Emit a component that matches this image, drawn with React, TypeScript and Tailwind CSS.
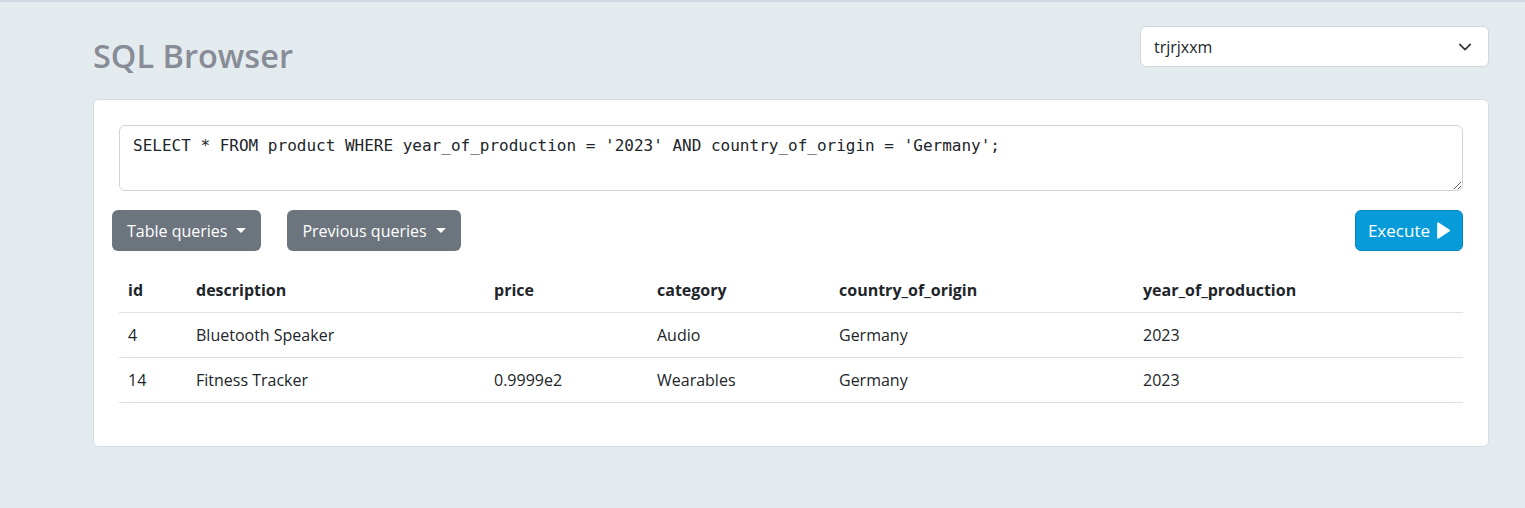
import React, { useState } from 'react';

const COLUMNS = [
  { key: 'id', width: 'w-[68px]' },
  { key: 'description', width: 'w-[298px]' },
  { key: 'price', width: 'w-[163px]' },
  { key: 'category', width: 'w-[182px]' },
  { key: 'country_of_origin', width: 'w-[304px]' },
  { key: 'year_of_production', width: '' },
];

const ROWS: Record<string, string>[] = [
  { id: '4', description: 'Bluetooth Speaker', price: '', category: 'Audio', country_of_origin: 'Germany', year_of_production: '2023' },
  { id: '14', description: 'Fitness Tracker', price: '0.9999e2', category: 'Wearables', country_of_origin: 'Germany', year_of_production: '2023' },
];

function Caret() {
  return <span className="ml-[9px] inline-block border-x-[5px] border-t-[5px] border-x-transparent border-t-white align-middle" />;
}

export default function App() {
  const [sql, setSql] = useState("SELECT * FROM product WHERE year_of_production = '2023' AND country_of_origin = 'Germany';");

  return (
    <div className="min-h-screen border-t-2 border-[#cfd9e3] bg-[#e4ebef] font-['Open_Sans',sans-serif] text-[#212529]">
      <div className="pl-[93px] pr-[36px] pt-[24px]">
        {/* Header */}
        <div className="flex items-start justify-between">
          <h1 className="mt-[8px] text-[32.5px] font-semibold leading-[44px] text-[#878c96]">SQL Browser</h1>
          <div className="flex h-[41px] w-[349px] items-center justify-between rounded-md border border-[#d0d7de] bg-white pl-[13px] pr-[16px] text-[16px]">
            <span>trjrjxxm</span>
            <svg width="14" height="14" viewBox="0 0 16 16" fill="none" stroke="#343a40" strokeWidth="2" strokeLinecap="round" strokeLinejoin="round">
              <path d="M2 5l6 6 6-6" />
            </svg>
          </div>
        </div>

        {/* Card */}
        <div className="mt-[21px] rounded-md border border-[#d4dde6] bg-white px-[25px] pb-[43px] pt-[25px]">
          <textarea
            value={sql}
            onChange={(e) => setSql(e.target.value)}
            rows={2}
            className="block h-[66px] w-full resize-y rounded-md border border-[#ced4da] px-[13px] py-[8px] font-['DejaVu_Sans_Mono',monospace] text-[16px] leading-[24px] text-[#212529] outline-none"
          />

          <div className="mt-[19px] -ml-[7px] flex items-center">
            <button className="flex h-[41px] items-center rounded-md bg-[#6c757d] px-[15px] text-[16px] text-white">
              Table queries <Caret />
            </button>
            <button className="ml-[26px] flex h-[41px] items-center rounded-md bg-[#6c757d] px-[15px] text-[16px] text-white">
              Previous queries <Caret />
            </button>
            <button className="ml-auto flex h-[41px] items-center rounded-md border border-[#0786bf] bg-[#079bda] pl-[12px] pr-[10px] text-[17px] text-white">
              Execute
              <svg className="ml-[3px]" width="19" height="19" viewBox="0 0 16 16" fill="white">
                <path d="M3.5 1.8v12.4c0 .6.7 1 1.2.6l9.3-6.2c.4-.3.4-.9 0-1.2L4.7 1.2c-.5-.4-1.2 0-1.2.6z" />
              </svg>
            </button>
          </div>

          <table className="mt-[18px] w-full border-collapse text-left text-[16px]">
            <thead>
              <tr className="border-b border-[#dee2e6]">
                {COLUMNS.map((c) => (
                  <th key={c.key} className={`${c.width} h-[43px] px-[9px] font-bold`}>
                    {c.key}
                  </th>
                ))}
              </tr>
            </thead>
            <tbody>
              {ROWS.map((r) => (
                <tr key={r.id} className="border-b border-[#dee2e6]">
                  {COLUMNS.map((c) => (
                    <td key={c.key} className="h-[45px] px-[9px]">
                      {r[c.key]}
                    </td>
                  ))}
                </tr>
              ))}
            </tbody>
          </table>
        </div>
      </div>
    </div>
  );
}
